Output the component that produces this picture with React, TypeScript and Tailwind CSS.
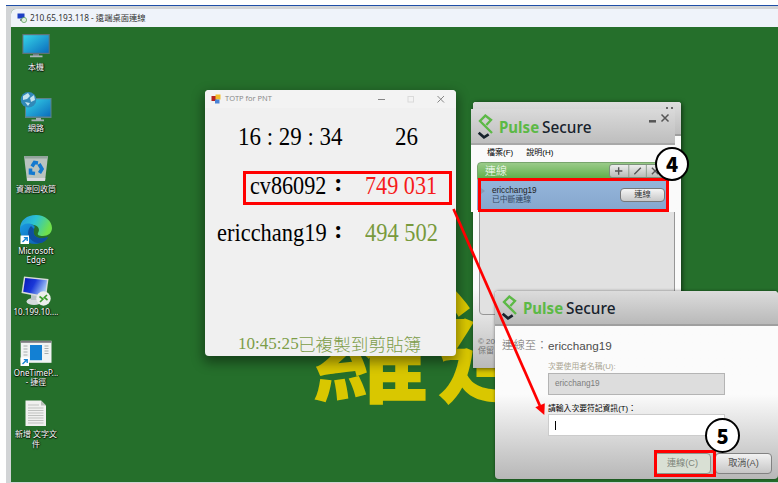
import React from "react";

function PulseMark({ className }: { className: string }) {
  return (
    <svg viewBox="0 0 90 96" className={className} fill="none" strokeWidth="7">
      <path d="M43 42 L57 27 L40 14 L24 30 L60 66" stroke="#5cb946" />
      <path d="M20 65 L36 79 L50 70" stroke="#17222c" strokeWidth="8" />
    </svg>
  );
}

function PulseBrand() {
  return (
    <div className="flex items-center whitespace-nowrap pt-px">
      <PulseMark className="h-8 w-[30px] shrink-0" />
      <div className="-ml-[3px] flex font-['Noto_Sans'] text-[16px] leading-none">
        <span className="w-[43px]">
          <span className="inline-block origin-left scale-x-[0.94] font-bold text-[#5cb946]">Pulse</span>
        </span>
        <span className="inline-block origin-left scale-x-[0.96] font-medium text-[#17222c]">Secure</span>
      </div>
    </div>
  );
}

function Shortcut() {
  return (
    <g>
      <rect x="1.5" y="22.5" width="8.5" height="8.5" fill="#fff" />
      <path d="M3.5 29 L8 24.8 M4.8 24.6 H8.2 V28" stroke="#1685d4" strokeWidth="1.4" fill="none" />
    </g>
  );
}

function Monitor() {
  return (
    <svg viewBox="0 0 34 33" className="h-[33px] w-[34px]">
      <defs>
        <linearGradient id="screen" x1="0" y1="0" x2="1" y2="1">
          <stop offset="0" stopColor="#35d4e8" />
          <stop offset="1" stopColor="#0b6cbd" />
        </linearGradient>
      </defs>
      <rect x="3.3" y="5" width="27.5" height="20" fill="#5e7377" />
      <rect x="4.4" y="6.2" width="25.3" height="17.6" fill="url(#screen)" />
      <path d="M14 25h6v2h-6z" fill="#6f7f86" />
      <path d="M11 26.5h12.5v1.8H11z" fill="#aab4b8" />
    </svg>
  );
}

function Network() {
  return (
    <svg viewBox="0 0 34 33" className="h-[33px] w-[34px]">
      <rect x="6" y="8" width="26.5" height="20" fill="#5e8388" />
      <rect x="7" y="9.2" width="24.5" height="17.3" fill="url(#screen)" />
      <path d="M12.5 29.5h12.5v1.8H12.5zM17 28h5v2h-5z" fill="#a3afb3" />
      <circle cx="9.5" cy="9.7" r="7.8" fill="#3189b8" />
      <path d="M4 6 L9 3 L11 6 L8 9 L4 10zM11 8 L15 5 L16 10 L12 12zM6 12 L11 13 L9 16z" fill="#c3e3ee" />
    </svg>
  );
}

function Recycle() {
  return (
    <svg viewBox="0 0 34 33" className="h-[33px] w-[34px]">
      <path d="M5 5h24l-3 25H8z" fill="#b9c3bf" />
      <path d="M5 5h24l-.4 2.6H5.5z" fill="#92a49c" />
      <path d="M8 27h18.3l-.3 3H8.2z" fill="#dad9df" />
      <g fill="none" stroke="#1479cf" strokeWidth="3.6">
        <path d="M13 15.5 L15.5 11.5 L19 12" />
        <path d="M20 13 L23 18 L20.5 22" />
        <path d="M16 22.5 L11.5 22 L11.5 17.5" />
      </g>
    </svg>
  );
}

function Edge() {
  return (
    <svg viewBox="0 0 34 33" className="h-[33px] w-[34px]">
      <defs>
        <linearGradient id="edgeTop" x1="0" y1="0" x2="1" y2="0.35">
          <stop offset="0" stopColor="#2596dd" />
          <stop offset="0.5" stopColor="#2bc3d2" />
          <stop offset="1" stopColor="#6fe04c" />
        </linearGradient>
        <linearGradient id="edgeLow" x1="0" y1="0" x2="1" y2="1">
          <stop offset="0" stopColor="#1a9be3" />
          <stop offset="1" stopColor="#0b55a8" />
        </linearGradient>
      </defs>
      <path d="M1 16C1 7 8 2 17 2c9 0 16 6 16 13 0 5-4 8-9 8-4 0-6-1-5-3 2-3 1-7-4-8C9 10 3 12 1 16z" fill="url(#edgeTop)" />
      <path d="M1 15c2-4 8-6 13-3 2 1 2 2 1 4-3 7 5 12 14 8-3 5-8 7-13 7C7 31 0 24 1 15z" fill="url(#edgeLow)" />
      <path d="M12 13c-6 6-2 16 7 17 5 0 8-2 10-6-9 3-16 0-14-8z" fill="#0e4f9f" />
      <Shortcut />
    </svg>
  );
}

function RemoteDesktop() {
  return (
    <svg viewBox="0 0 34 33" className="h-[33px] w-[34px]">
      <defs>
        <linearGradient id="rdp" x1="0" y1="0" x2="1" y2="0.4">
          <stop offset="0" stopColor="#0717b5" />
          <stop offset="0.5" stopColor="#1a38d8" />
          <stop offset="1" stopColor="#9fc4f5" />
        </linearGradient>
      </defs>
      <ellipse cx="15" cy="27.5" rx="7.5" ry="3.6" fill="#d5dbdd" />
      <path d="M12 20h7v6h-7z" fill="#b9c3c6" />
      <path d="M5 2.5 L29.5 5 L27 24 L2.5 19z" fill="#d7dcd8" />
      <path d="M6.2 4 L28 6.3 L25.8 22 L4.2 17.8z" fill="url(#rdp)" />
      <circle cx="24.5" cy="24.5" r="7.2" fill="#eceeec" />
      <path d="M20.5 22.5 L24 25 L21 28 M28 21 L25.3 23.5 L28.5 26" stroke="#3a9c2c" strokeWidth="1.6" fill="none" />
    </svg>
  );
}

function OneTime() {
  return (
    <svg viewBox="0 0 34 33" className="h-[33px] w-[34px]">
      <rect x="1.7" y="5.8" width="30.8" height="22" fill="#f1f3f3" />
      <rect x="1.7" y="5.8" width="30.8" height="2" fill="#7d7a80" />
      <rect x="11" y="10" width="12" height="15.2" fill="#1380d3" />
      <path d="M4.5 11h4M4.5 14h4M4.5 17h4M4.5 20h4M25.5 11h4M25.5 13.5h4M25.5 16h4M25.5 18.5h4" stroke="#a7adad" />
      <Shortcut />
    </svg>
  );
}

function TextFile() {
  return (
    <svg viewBox="0 0 34 33" className="h-[33px] w-[34px]">
      <path d="M6.5 4.5h15.5l5 5V30H6.5z" fill="#f0f0ef" />
      <path d="M22 4.5v5h5z" fill="#b9bfb9" />
      <path d="M9 9h11M9 12h15.5M9 14.5h15.5M9 17h15.5M9 19.5h15.5M9 22h15.5M9 24.5h15.5M9 27h15.5" stroke="#bfc1bf" />
    </svg>
  );
}

const shortcuts = [
  { icon: Monitor, lines: ["本機"] },
  { icon: Network, lines: ["網路"] },
  { icon: Recycle, lines: ["資源回收筒"] },
  { icon: Edge, lines: ["Microsoft", "Edge"] },
  { icon: RemoteDesktop, lines: ["10.199.10...."] },
  { icon: OneTime, lines: ["OneTimeP...", "- 捷徑"] },
  { icon: TextFile, lines: ["新增 文字文", "件"] },
];

function DesktopIcons() {
  return (
    <div className="flex w-[50px] flex-col pt-[2px]">
      {shortcuts.map(({ icon: Icon, lines }) => (
        <div key={lines[0]} className="flex h-[61.2px] shrink-0 flex-col items-center">
          <Icon />
          {lines.map((l) => (
            <span
              key={l}
              className="h-[9.5px] whitespace-nowrap font-['Noto_Sans','Noto_Sans_CJK_TC',sans-serif] text-[8px] leading-[9.5px] text-white [text-shadow:0_1px_1px_#000,1px_0_1px_#000]"
            >
              {l}
            </span>
          ))}
        </div>
      ))}
    </div>
  );
}

function TotpWindow() {
  return (
    <section className="absolute left-[205px] top-[90px] h-[266px] w-[251px] overflow-hidden rounded-[4px] bg-[#f0f0f0] font-['Liberation_Serif','Noto_Sans_CJK_TC',serif] text-[25.5px] leading-none shadow-[0_5px_12px_2px_rgba(0,0,0,0.4)]">
      <header className="flex h-[18px] items-center bg-[#f3f3f3] pl-[6px] pr-[11px] font-['Open_Sans','Noto_Sans',sans-serif] text-[7.5px] text-[#858585]">
        <svg viewBox="0 0 10 10" className="mr-1 h-[10px] w-[10px]">
          <rect x="0.5" y="2" width="5" height="5" fill="#b52320" />
          <rect x="4.5" y="0.5" width="5" height="5" fill="#f3bd2c" />
          <rect x="4" y="5.5" width="4.5" height="4" fill="#4a83d6" />
        </svg>
        <span className="grow">TOTP for PNT</span>
        <svg viewBox="0 0 68 8" className="h-2 w-[68px]" fill="none" stroke="#858585">
          <path d="M1 4.5h7" />
          <rect x="31" y="1.5" width="5.5" height="5.5" stroke="#dadada" />
          <path d="M60.5 1 L67 7.5 M67 1 L60.5 7.5" />
        </svg>
      </header>
      <div className="flex h-[58px] items-center pl-[33px]">
        <span className="w-[157px] whitespace-nowrap">
          <span className="inline-block origin-left scale-x-[0.9]">16 : 29 : 34</span>
        </span>
        <span className="inline-block origin-left scale-x-[0.9]">26</span>
      </div>
      <div className="flex h-[40px] items-center pl-[45px]">
        <span className="flex w-[115px] whitespace-nowrap">
          <span className="w-[80px]"><span className="inline-block origin-left scale-x-[0.87]">cv86092</span></span>
          <span className="-mt-[3px] pl-1 font-bold">:</span>
        </span>
        <span className="inline-block origin-left scale-x-[0.87] whitespace-nowrap text-[#f61a1a]">749 031</span>
      </div>
      <div className="flex h-[54px] items-center pl-[12px]">
        <span className="flex w-[148px] whitespace-nowrap">
          <span className="w-[113px]"><span className="inline-block origin-left scale-x-[0.88]">ericchang19</span></span>
          <span className="-mt-[3px] pl-1 font-bold">:</span>
        </span>
        <span className="inline-block origin-left scale-x-[0.88] whitespace-nowrap text-[#789a3c]">494 502</span>
      </div>
      <div className="flex h-[96px] items-end whitespace-nowrap pb-[3px] pl-[33px] text-[17.6px] font-light text-[#7c9d48]">
        <span className="w-[60px]"><span className="inline-block origin-left scale-x-[0.97]">10:45:25</span></span>
        <span className="font-['Noto_Sans_CJK_TC',sans-serif]">已複製到剪貼簿</span>
      </div>
    </section>
  );
}

function PulseBackWindow() {
  return (
    <section className="absolute left-[473px] top-[102px] flex h-[266px] w-[208px] flex-col overflow-hidden rounded-t-[3px] bg-gradient-to-b from-[#fafafa] from-70% to-[#b9b9b9] shadow-[1px_1px_5px_rgba(0,0,0,0.6)]">
      <header className="flex h-[34px] justify-end border-b-2 border-[#9e9e9e] bg-gradient-to-b from-[#dedede] to-[#bdbdbd] pr-[8px] pt-[5px]">
        <span className="h-[2px] w-[7px] border-x-2 border-[#666]" />
      </header>
      <div className="ml-[6px] h-[179px] w-[196px] shrink-0 rounded-b-[4px] border border-[#969696] bg-[#e1e1e1]" />
      <footer className="pl-[5px] pt-[22px] font-['Liberation_Sans','Noto_Sans_CJK_TC',sans-serif] text-[8px] leading-[9px] text-[#707070]">
        <p>© 20</p>
        <p>保留</p>
      </footer>
    </section>
  );
}

function PulseWindow() {
  return (
    <section className="absolute left-[471px] top-[109px] h-[103px] w-[204px] overflow-hidden bg-[#fafafa] font-['Liberation_Sans','Noto_Sans_CJK_TC',sans-serif]">
      <header className="flex h-[36px] items-center justify-between border-b-2 border-[#a8a8a8] bg-gradient-to-b from-[#dadada] to-[#bebebe] pl-[1px] pr-[5px]">
        <PulseBrand />
        <svg viewBox="0 0 22 20" className="h-5 w-[22px] self-start" fill="none" stroke="#555" strokeWidth="1.5">
          <path d="M1 12.3h7" strokeWidth="2.5" />
          <path d="M13.5 5.5 L20.5 12.5 M20.5 5.5 L13.5 12.5" />
        </svg>
      </header>
      <nav className="flex h-[15px] items-center gap-[13px] pl-[16px] text-[8px] text-black">
        <span>檔案(F)</span>
        <span>說明(H)</span>
      </nav>
      <div className="ml-[6px] mt-[2px] w-[192px]">
        <div className="flex h-[18px] items-center justify-between rounded-t-[4px] border border-[#78a56d] bg-gradient-to-b from-[#9acb89] to-[#5cad46] pl-[7px]">
          <span className="text-[11px] font-light text-white">連線</span>
          <div className="flex h-[14px] w-[59px] rounded-[3px] border border-[#7b927a] bg-gradient-to-b from-[#eee] to-[#b7bcb7]">
            <svg viewBox="0 0 59 13" className="h-full w-full" fill="none" stroke="#555" strokeWidth="1.5">
              <path d="M4 6.5h8M8 2.5v8M25 10l7-7M44 3l7 7M51 3l-7 7" />
              <path d="M19 0v13M38 0v13" stroke="#8a9a8a" strokeWidth="1" />
            </svg>
          </div>
        </div>
        <div className="flex h-[30px] items-center justify-between bg-gradient-to-b from-[#95b6db] to-[#86a7cd] pl-[4px] pr-[4px]">
          <div className="flex">
            <span className="mt-[2px] h-0 w-0 border-y-[3px] border-l-[4px] border-y-transparent border-l-[#859bb5]" />
            <div className="pl-[7px] text-[8.2px] leading-[9px] text-[#222]">
              <p>ericchang19</p>
              <p className="text-[7.8px] text-[#34485e]">已中斷連線</p>
            </div>
          </div>
          <button className="flex h-[14px] w-[45px] items-center justify-center rounded-[4px] border border-[#77787a] bg-gradient-to-b from-[#f5f5f5] to-[#c8c8c8] text-[8.2px] leading-none text-[#333]">
            連線
          </button>
        </div>
      </div>
    </section>
  );
}

function ConnectDialog() {
  return (
    <section className="absolute left-[495px] top-[291px] flex h-[188px] w-[283px] flex-col overflow-hidden rounded-[4px] bg-gradient-to-b from-[#fbfbfb] from-55% to-[#b7b7b7] font-['Liberation_Sans','Noto_Sans_CJK_TC',sans-serif] shadow-[0_0_3px_rgba(0,0,0,0.5)]">
      <header className="flex h-[35px] shrink-0 items-center border-b-2 border-[#9f9f9f] bg-gradient-to-b from-[#dcdcdc] to-[#b9b9b9] pl-[1px]">
        <PulseBrand />
      </header>
      <h1 className="flex h-[40px] shrink-0 items-center whitespace-nowrap pl-[7px] text-[11.7px] text-[#4c4c4c]">
        <span className="w-[46px] text-[11.4px] font-light text-[#6d6d6d]">連線至：</span>
        <span>ericchang19</span>
      </h1>
      <div className="flex flex-col pl-[53px] text-[8.2px] leading-none">
        <label className="-mt-[5px] h-[12px] text-[7.8px] leading-[12px] text-[#a9a592]">次要使用者名稱(U):</label>
        <div className="flex h-[22px] w-[177px] items-center border border-[#b4b4b4] bg-[#dddddd] pl-[6px] text-[#7c7c7c]">ericchang19</div>
        <label className="mt-[8px] h-[12px] text-[7.8px] leading-[12px] text-black">請輸入次要符記資訊(T)：</label>
        <div className="mt-[-1px] flex h-[22px] w-[177px] items-center border border-[#cccccc] bg-white pl-[6px]">
          <span className="h-[9px] w-px bg-black" />
        </div>
      </div>
      <footer className="flex justify-end gap-[4px] pr-[6px] pt-[17px] text-[9.2px] leading-none">
        <button className="h-[21px] w-[57px] rounded-[4px] border border-[#8e968c] bg-[#d9e0d4] text-[#7d847a]">連線(C)</button>
        <button className="h-[21px] w-[57px] rounded-[4px] border border-[#828282] bg-gradient-to-b from-[#f2f2f2] to-[#c6c6c6] text-[#4d4d4d]">取消(A)</button>
      </footer>
    </section>
  );
}

function Annotations() {
  return (
    <>
      <div className="absolute left-[243px] top-[171px] h-[34px] w-[209px] border-[3px] border-[#ff0000]" />
      <div className="absolute left-[478px] top-[178px] h-[34px] w-[191px] border-[3px] border-[#ff0000]" />
      <div className="absolute left-[654px] top-[450px] h-[27px] w-[62px] border-[3px] border-[#ff0000]" />
      <svg viewBox="0 0 778 483" className="absolute left-0 top-0 h-[483px] w-[778px]">
        <path d="M453.5 209 L540 406" stroke="#ff0000" strokeWidth="2.7" />
        <path d="M544.3 415 L535.3 407.3 L544.8 403.3z" fill="#ff0000" />
      </svg>
      <div className="absolute left-[655px] top-[147px] flex h-[34px] w-[34px] items-center justify-center rounded-full border-2 border-black bg-white font-['Noto_Sans_CJK_TC',sans-serif] text-[20px] font-black leading-none">
        4
      </div>
      <div className="absolute left-[705px] top-[418px] flex h-[35px] w-[35px] items-center justify-center rounded-full border-2 border-black bg-white font-['Noto_Sans_CJK_TC',sans-serif] text-[20px] font-black leading-none">
        5
      </div>
    </>
  );
}

export default function App() {
  return (
    <main className="relative h-[483px] w-[778px] overflow-hidden bg-white pl-[6px] pt-[5px]">
      <div className="h-[478px] border-t border-[#1f4fa8] bg-[#d2d4d6] pl-[5px] pt-[3px]">
        <div className="flex h-[473px] flex-col overflow-hidden rounded-tl-[5px] bg-[#256f2b]">
          <header className="flex h-[18px] shrink-0 items-center bg-[#eff3fa] pl-[6px] font-['Noto_Sans','Noto_Sans_CJK_TC',sans-serif] text-[8.3px] text-[#333]">
            <svg viewBox="0 0 10 10" className="mr-[3px] h-[10px] w-[10px]">
              <rect x="0.5" y="0.5" width="7" height="5" fill="#1c3fc4" />
              <path d="M3 6h3v2H3z" fill="#889" />
              <circle cx="7" cy="7" r="2.6" fill="#dfeee0" stroke="#4d9a50" strokeWidth="0.7" />
            </svg>
            <span className="whitespace-nowrap">210.65.193.118 - 遠端桌面連線</span>
          </header>
          <DesktopIcons />
        </div>
      </div>
      <div className="absolute left-[309px] top-[279px] whitespace-nowrap font-['Noto_Sans_CJK_TC',sans-serif] text-[121px] font-bold leading-[124px] tracking-[6px] text-[#d9c700]">
        羅達
      </div>
      <TotpWindow />
      <PulseBackWindow />
      <PulseWindow />
      <ConnectDialog />
      <Annotations />
    </main>
  );
}
